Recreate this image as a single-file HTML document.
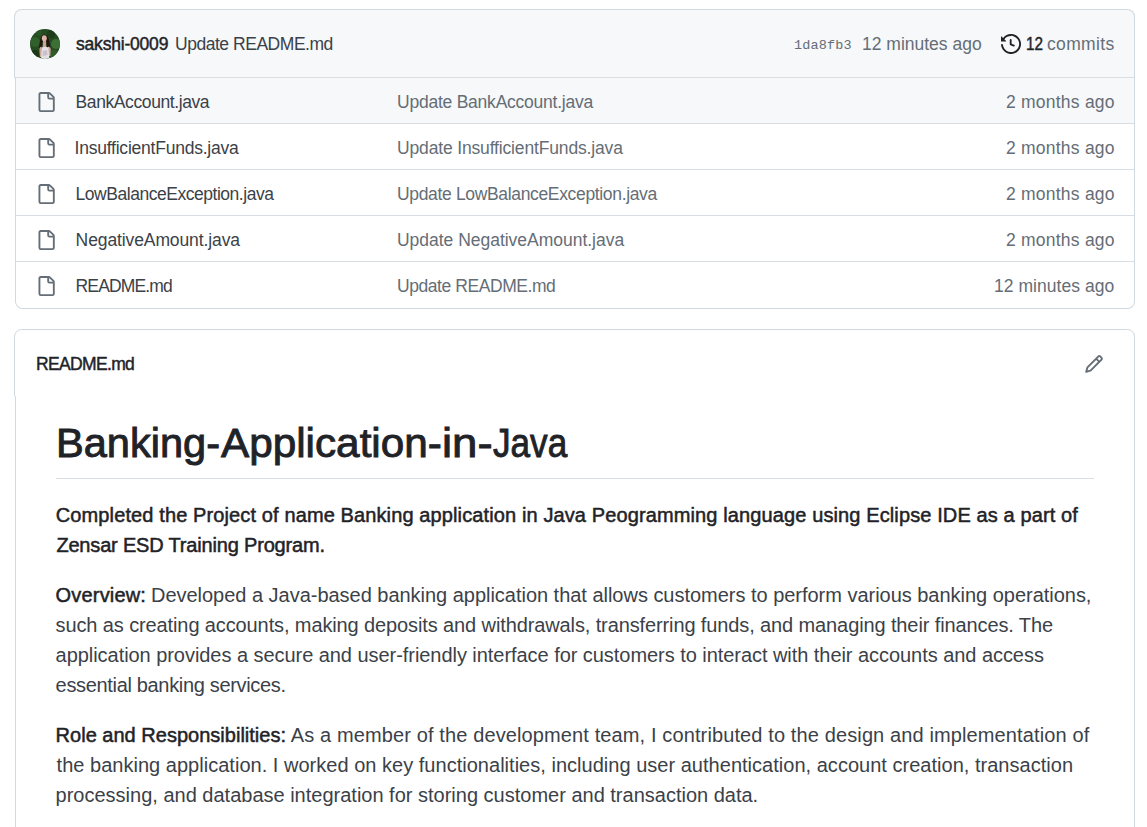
<!DOCTYPE html>
<html><head><meta charset="utf-8">
<style>
html,body{margin:0;padding:0;background:#fff;}
body{width:1147px;height:827px;overflow:hidden;position:relative;font-family:"Liberation Sans",sans-serif;color:#1f2328;}
.card{position:absolute;left:14px;width:1119px;border:1px solid #d1d9e0;border-radius:7.5px;background:#fff;overflow:hidden;}
#c1{top:9px;height:298px;}
#c2{top:329px;height:520px;}
.hdr{position:absolute;left:0;top:0;width:1119px;height:67px;background:#f6f8fa;border-bottom:1px solid #d8dee4;}
.row{position:absolute;left:0;width:1119px;height:45px;border-bottom:1px solid #d8dee4;}
.row.last{border-bottom:none;}
.ico{position:absolute;}
.t{position:absolute;white-space:nowrap;}
/*HIDE*/
</style></head><body>
<div class="ico" style="left:14px;top:9px;width:1119px;height:67px;border:1px solid #d1d9e0;border-bottom:1px solid #d8dee4;border-radius:7.5px 7.5px 0 0;background:#f6f8fa"></div>
<div class="ico" style="left:15px;top:78px;width:1118px;height:230px;border:1px solid #d1d9e0;border-top:none;border-radius:0 0 7.5px 7.5px;background:#fff;overflow:hidden">
  <div class="row" style="top:0px;background:#f6f8fa"></div>
  <div class="row" style="top:46px"></div>
  <div class="row" style="top:92px"></div>
  <div class="row" style="top:138px"></div>
  <div class="row last" style="top:184px"></div>
</div>
<div class="card" id="c2"></div>
<!-- avatar -->
<svg class="ico" style="left:30px;top:29px" width="30" height="30" viewBox="0 0 30 30">
  <defs><clipPath id="av"><circle cx="15" cy="15" r="15"/></clipPath></defs>
  <g clip-path="url(#av)">
    <rect width="30" height="30" fill="#264a22"/>
    <circle cx="5" cy="13" r="5" fill="#30602b"/>
    <circle cx="26" cy="15" r="5" fill="#3d7034"/>
    <circle cx="24" cy="25" r="4" fill="#2f5c2a"/>
    <circle cx="5" cy="25" r="4" fill="#1b3717"/>
    <circle cx="21" cy="5" r="4" fill="#1f3d1b"/>
    <circle cx="9" cy="4" r="3" fill="#2b5526"/>
    <path d="M8.8 22 Q9.5 12 11 8 Q14 3.5 17.5 7 Q19.8 11 20.5 22 L17 22 L16.3 13 L12.5 13 L12 22 Z" fill="#231611"/>
    <ellipse cx="14.3" cy="9.3" rx="2.5" ry="3.1" fill="#dcb7a5"/>
    <path d="M13 12 L16 12 L16.3 18 L12.7 18 Z" fill="#c9a290"/>
    <path d="M9.3 20 Q9.8 17.5 11.5 17.5 L12 28 L10 28 Z" fill="#d0a995"/>
    <path d="M18 17.5 Q20.3 17.5 20.8 20 L20.3 27 L18.3 27 Z" fill="#d0a995"/>
    <path d="M11.5 18.5 Q15 17 18.5 18.5 L19.5 31 L11 31 Z" fill="#e2e0e4"/>
    <path d="M13 22 L17 21 L17.5 26 L12.5 27Z" fill="#cbbfcc"/>
  </g>
</svg>
<!-- history icon -->
<svg class="ico" style="left:1001px;top:34px" width="20" height="20" viewBox="0 0 16 16" fill="#1f2328"><path d="m.427 1.927 1.215 1.215a8.002 8.002 0 1 1-1.6 5.685.75.75 0 1 1 1.493-.154 6.5 6.5 0 1 0 1.18-4.458l1.358 1.358A.25.25 0 0 1 3.896 6H.25A.25.25 0 0 1 0 5.75V2.104a.25.25 0 0 1 .427-.177ZM7.75 4a.75.75 0 0 1 .75.75v2.992l2.028.812a.75.75 0 0 1-.557 1.392l-2.5-1A.751.751 0 0 1 7 8.25v-3.5A.75.75 0 0 1 7.75 4Z"/></svg>
<!-- file icons -->
<svg class="ico" style="left:36px;top:92px" width="20" height="20" viewBox="0 0 16 16" fill="#656d76"><path d="M2 1.75C2 .784 2.784 0 3.75 0h6.586c.464 0 .909.184 1.237.513l2.914 2.914c.329.328.513.773.513 1.237v9.586A1.75 1.75 0 0 1 13.25 16h-9.5A1.75 1.75 0 0 1 2 14.25Zm1.75-.25a.25.25 0 0 0-.25.25v12.5c0 .138.112.25.25.25h9.5a.25.25 0 0 0 .25-.25V6h-2.75A1.75 1.75 0 0 1 9 4.25V1.5Zm6.75.062V4.25c0 .138.112.25.25.25h2.688l-.011-.013-2.914-2.914-.013-.011Z"/></svg>
<svg class="ico" style="left:36px;top:138px" width="20" height="20" viewBox="0 0 16 16" fill="#656d76"><path d="M2 1.75C2 .784 2.784 0 3.750 0h6.586c.464 0 .909.184 1.237.513l2.914 2.914c.329.328.513.773.513 1.237v9.586A1.75 1.75 0 0 1 13.25 16h-9.5A1.75 1.75 0 0 1 2 14.25Zm1.75-.25a.25.25 0 0 0-.25.25v12.5c0 .138.112.25.25.25h9.5a.25.25 0 0 0 .25-.25V6h-2.75A1.75 1.75 0 0 1 9 4.25V1.5Zm6.75.062V4.25c0 .138.112.25.25.25h2.688l-.011-.013-2.914-2.914-.013-.011Z"/></svg>
<svg class="ico" style="left:36px;top:184px" width="20" height="20" viewBox="0 0 16 16" fill="#656d76"><path d="M2 1.75C2 .784 2.784 0 3.750 0h6.586c.464 0 .909.184 1.237.513l2.914 2.914c.329.328.513.773.513 1.237v9.586A1.75 1.75 0 0 1 13.25 16h-9.5A1.75 1.75 0 0 1 2 14.25Zm1.75-.25a.25.25 0 0 0-.25.25v12.5c0 .138.112.25.25.25h9.5a.25.25 0 0 0 .25-.25V6h-2.75A1.75 1.75 0 0 1 9 4.25V1.5Zm6.75.062V4.25c0 .138.112.25.25.25h2.688l-.011-.013-2.914-2.914-.013-.011Z"/></svg>
<svg class="ico" style="left:36px;top:230px" width="20" height="20" viewBox="0 0 16 16" fill="#656d76"><path d="M2 1.75C2 .784 2.784 0 3.750 0h6.586c.464 0 .909.184 1.237.513l2.914 2.914c.329.328.513.773.513 1.237v9.586A1.75 1.75 0 0 1 13.25 16h-9.5A1.75 1.75 0 0 1 2 14.25Zm1.75-.25a.25.25 0 0 0-.25.25v12.5c0 .138.112.25.25.25h9.5a.25.25 0 0 0 .25-.25V6h-2.75A1.75 1.75 0 0 1 9 4.25V1.5Zm6.75.062V4.25c0 .138.112.25.25.25h2.688l-.011-.013-2.914-2.914-.013-.011Z"/></svg>
<svg class="ico" style="left:36px;top:276px" width="20" height="20" viewBox="0 0 16 16" fill="#656d76"><path d="M2 1.75C2 .784 2.784 0 3.750 0h6.586c.464 0 .909.184 1.237.513l2.914 2.914c.329.328.513.773.513 1.237v9.586A1.75 1.75 0 0 1 13.25 16h-9.5A1.75 1.75 0 0 1 2 14.25Zm1.75-.25a.25.25 0 0 0-.25.25v12.5c0 .138.112.25.25.25h9.5a.25.25 0 0 0 .25-.25V6h-2.75A1.75 1.75 0 0 1 9 4.25V1.5Zm6.75.062V4.25c0 .138.112.25.25.25h2.688l-.011-.013-2.914-2.914-.013-.011Z"/></svg>
<!-- pencil -->
<svg class="ico" style="left:1084px;top:354px" width="20" height="20" viewBox="0 0 16 16" fill="#656d76"><path d="M11.013 1.427a1.75 1.75 0 0 1 2.474 0l1.086 1.086a1.75 1.75 0 0 1 0 2.474l-8.61 8.61c-.21.21-.47.364-.756.445l-3.251.93a.75.75 0 0 1-.927-.928l.929-3.25c.081-.286.235-.547.445-.758l8.61-8.61Zm.176 4.823L9.75 4.81l-6.286 6.287a.253.253 0 0 0-.064.108l-.558 1.953 1.953-.558a.253.253 0 0 0 .108-.064Zm1.238-3.763a.25.25 0 0 0-.354 0L10.811 3.75l1.439 1.44 1.263-1.263a.25.25 0 0 0 0-.354Z"/></svg>
<!-- border step -->
<div class="ico" style="left:14px;top:396px;width:1px;height:431px;background:#fff"></div>
<div class="ico" style="left:15px;top:396px;width:1px;height:431px;background:#d1d9e0"></div>
<!-- h1 rule -->
<div class="ico" style="left:56px;top:478px;width:1038px;height:1px;background:#d8dee4"></div>
<div class="t" style="left:76.00px;top:34px;font-size:17.5px;line-height:20px;font-weight:bold;color:#1f2328;font-family:'Liberation Sans',sans-serif;letter-spacing:-0.200px;font-weight:normal;-webkit-text-stroke:0.45px #1f2328">sakshi-0009</div>
<div class="t" style="left:175.00px;top:34px;font-size:17.5px;line-height:20px;font-weight:normal;color:#3b4148;font-family:'Liberation Sans',sans-serif;letter-spacing:-0.467px">Update README.md</div>
<div class="t" style="left:794.00px;top:36px;font-size:13.5px;line-height:20px;font-weight:normal;color:#656d76;font-family:'Liberation Mono',monospace;letter-spacing:0.167px">1da8fb3</div>
<div class="t" style="left:862.00px;top:34px;font-size:17.5px;line-height:20px;font-weight:normal;color:#656d76;font-family:'Liberation Sans',sans-serif;letter-spacing:0.000px">12 minutes ago</div>
<div class="t" style="left:1026.00px;top:34px;font-size:17.5px;line-height:20px;font-weight:bold;color:#1f2328;font-family:'Liberation Sans',sans-serif;letter-spacing:0.000px;font-weight:normal;-webkit-text-stroke:0.45px #1f2328;transform:scaleX(0.8753);transform-origin:0 0">12</div>
<div class="t" style="left:1047.00px;top:34px;font-size:17.5px;line-height:20px;font-weight:normal;color:#656d76;font-family:'Liberation Sans',sans-serif;letter-spacing:0.333px">commits</div>
<div class="t" style="left:75.60px;top:92px;font-size:17.5px;line-height:20px;font-weight:normal;color:#3b4148;font-family:'Liberation Sans',sans-serif;letter-spacing:-0.407px">BankAccount.java</div>
<div class="t" style="left:397.00px;top:92px;font-size:17.5px;line-height:20px;font-weight:normal;color:#656d76;font-family:'Liberation Sans',sans-serif;letter-spacing:-0.232px">Update BankAccount.java</div>
<div class="t" style="left:1006.00px;top:92px;font-size:17.5px;line-height:20px;font-weight:normal;color:#656d76;font-family:'Liberation Sans',sans-serif;letter-spacing:0.227px">2 months ago</div>
<div class="t" style="left:74.60px;top:138px;font-size:17.5px;line-height:20px;font-weight:normal;color:#3b4148;font-family:'Liberation Sans',sans-serif;letter-spacing:-0.229px">InsufficientFunds.java</div>
<div class="t" style="left:397.00px;top:138px;font-size:17.5px;line-height:20px;font-weight:normal;color:#656d76;font-family:'Liberation Sans',sans-serif;letter-spacing:-0.154px">Update InsufficientFunds.java</div>
<div class="t" style="left:1006.00px;top:138px;font-size:17.5px;line-height:20px;font-weight:normal;color:#656d76;font-family:'Liberation Sans',sans-serif;letter-spacing:0.227px">2 months ago</div>
<div class="t" style="left:75.60px;top:184px;font-size:17.5px;line-height:20px;font-weight:normal;color:#3b4148;font-family:'Liberation Sans',sans-serif;letter-spacing:-0.470px">LowBalanceException.java</div>
<div class="t" style="left:397.00px;top:184px;font-size:17.5px;line-height:20px;font-weight:normal;color:#656d76;font-family:'Liberation Sans',sans-serif;letter-spacing:-0.340px">Update LowBalanceException.java</div>
<div class="t" style="left:1006.00px;top:184px;font-size:17.5px;line-height:20px;font-weight:normal;color:#656d76;font-family:'Liberation Sans',sans-serif;letter-spacing:0.227px">2 months ago</div>
<div class="t" style="left:75.60px;top:230px;font-size:17.5px;line-height:20px;font-weight:normal;color:#3b4148;font-family:'Liberation Sans',sans-serif;letter-spacing:-0.106px">NegativeAmount.java</div>
<div class="t" style="left:397.00px;top:230px;font-size:17.5px;line-height:20px;font-weight:normal;color:#656d76;font-family:'Liberation Sans',sans-serif;letter-spacing:-0.020px">Update NegativeAmount.java</div>
<div class="t" style="left:1006.00px;top:230px;font-size:17.5px;line-height:20px;font-weight:normal;color:#656d76;font-family:'Liberation Sans',sans-serif;letter-spacing:0.227px">2 months ago</div>
<div class="t" style="left:75.60px;top:276px;font-size:17.5px;line-height:20px;font-weight:normal;color:#3b4148;font-family:'Liberation Sans',sans-serif;letter-spacing:-0.875px">README.md</div>
<div class="t" style="left:397.00px;top:276px;font-size:17.5px;line-height:20px;font-weight:normal;color:#656d76;font-family:'Liberation Sans',sans-serif;letter-spacing:-0.433px">Update README.md</div>
<div class="t" style="left:994.00px;top:276px;font-size:17.5px;line-height:20px;font-weight:normal;color:#656d76;font-family:'Liberation Sans',sans-serif;letter-spacing:0.038px">12 minutes ago</div>
<div class="t" style="left:36.00px;top:354px;font-size:17.5px;line-height:20px;font-weight:bold;color:#1f2328;font-family:'Liberation Sans',sans-serif;letter-spacing:-0.650px;font-weight:normal;-webkit-text-stroke:0.45px #1f2328">README.md</div>
<div class="t" style="left:55.50px;top:419px;font-size:40px;line-height:48px;font-weight:bold;color:#1f2328;font-family:'Liberation Sans',sans-serif;letter-spacing:0.000px;font-weight:normal;-webkit-text-stroke:0.9px #1f2328;transform:scaleX(1.0390);transform-origin:0 0">Banking-</div>
<div class="t" style="left:221.00px;top:419px;font-size:40px;line-height:48px;font-weight:bold;color:#1f2328;font-family:'Liberation Sans',sans-serif;letter-spacing:0.000px;font-weight:normal;-webkit-text-stroke:0.9px #1f2328;transform:scaleX(1.0567);transform-origin:0 0">Application-</div>
<div class="t" style="left:442.10px;top:419px;font-size:40px;line-height:48px;font-weight:bold;color:#1f2328;font-family:'Liberation Sans',sans-serif;letter-spacing:0.000px;font-weight:normal;-webkit-text-stroke:0.9px #1f2328;transform:scaleX(1.1382);transform-origin:0 0">in-</div>
<div class="t" style="left:492.70px;top:419px;font-size:40px;line-height:48px;font-weight:bold;color:#1f2328;font-family:'Liberation Sans',sans-serif;letter-spacing:0.000px;font-weight:normal;-webkit-text-stroke:0.9px #1f2328;transform:scaleX(0.8780);transform-origin:0 0">Java</div>
<div class="t" style="left:55.80px;top:500px;font-size:20px;line-height:30px;font-weight:bold;color:#1f2328;font-family:'Liberation Sans',sans-serif;letter-spacing:0.117px;font-weight:normal;-webkit-text-stroke:0.5px #1f2328">Completed the Project of name Banking application in Java Peogramming language using Eclipse IDE as a part of</div>
<div class="t" style="left:56.40px;top:530px;font-size:20px;line-height:30px;font-weight:bold;color:#1f2328;font-family:'Liberation Sans',sans-serif;letter-spacing:-0.178px;font-weight:normal;-webkit-text-stroke:0.5px #1f2328">Zensar ESD Training Program.</div>
<div class="t" style="left:55.60px;top:580px;font-size:20px;line-height:30px;font-weight:bold;color:#1f2328;font-family:'Liberation Sans',sans-serif;letter-spacing:0.175px;font-weight:normal;-webkit-text-stroke:0.5px #1f2328">Overview:</div>
<div class="t" style="left:151.00px;top:580px;font-size:20px;line-height:30px;font-weight:normal;color:#3b4148;font-family:'Liberation Sans',sans-serif;letter-spacing:-0.023px">Developed a Java-based banking application that allows customers to perform various banking operations,</div>
<div class="t" style="left:55.60px;top:610px;font-size:20px;line-height:30px;font-weight:normal;color:#3b4148;font-family:'Liberation Sans',sans-serif;letter-spacing:-0.115px">such as creating accounts, making deposits and withdrawals, transferring funds, and managing their finances. The</div>
<div class="t" style="left:55.60px;top:640px;font-size:20px;line-height:30px;font-weight:normal;color:#3b4148;font-family:'Liberation Sans',sans-serif;letter-spacing:-0.049px">application provides a secure and user-friendly interface for customers to interact with their accounts and access</div>
<div class="t" style="left:55.60px;top:670px;font-size:20px;line-height:30px;font-weight:normal;color:#3b4148;font-family:'Liberation Sans',sans-serif;letter-spacing:-0.331px">essential banking services.</div>
<div class="t" style="left:55.60px;top:720px;font-size:20px;line-height:30px;font-weight:bold;color:#1f2328;font-family:'Liberation Sans',sans-serif;letter-spacing:0.012px;font-weight:normal;-webkit-text-stroke:0.5px #1f2328">Role and Responsibilities:</div>
<div class="t" style="left:290.80px;top:720px;font-size:20px;line-height:30px;font-weight:normal;color:#3b4148;font-family:'Liberation Sans',sans-serif;letter-spacing:0.120px">As a member of the development team, I contributed to the design and implementation of</div>
<div class="t" style="left:56.60px;top:750px;font-size:20px;line-height:30px;font-weight:normal;color:#3b4148;font-family:'Liberation Sans',sans-serif;letter-spacing:0.021px">the banking application. I worked on key functionalities, including user authentication, account creation, transaction</div>
<div class="t" style="left:55.60px;top:780px;font-size:20px;line-height:30px;font-weight:normal;color:#3b4148;font-family:'Liberation Sans',sans-serif;letter-spacing:-0.001px">processing, and database integration for storing customer and transaction data.</div>
</body></html>
